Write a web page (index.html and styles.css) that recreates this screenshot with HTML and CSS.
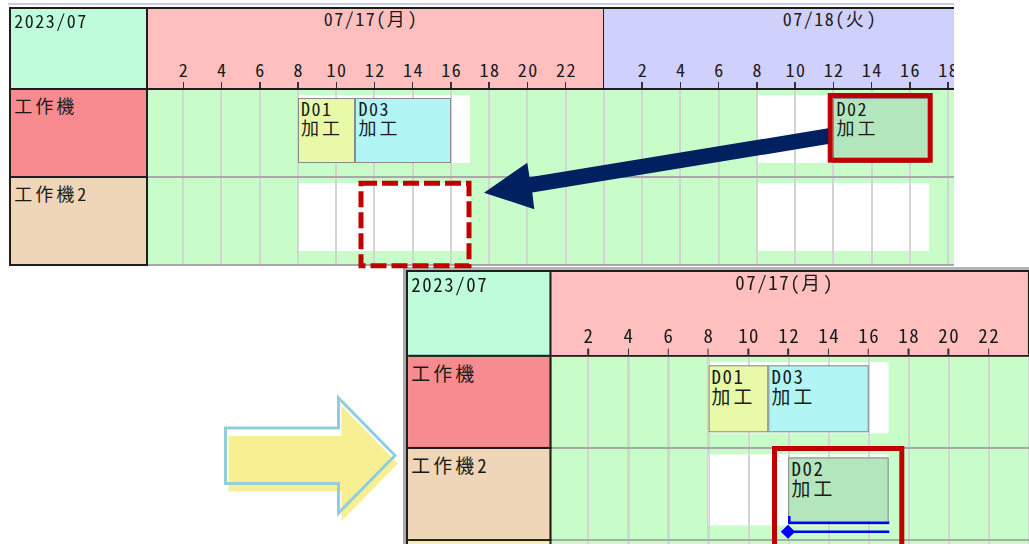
FILE: index.html
```html
<!DOCTYPE html>
<html lang="ja">
<head>
    <meta charset="UTF-8">
    <meta name="viewport" content="width=device-width, initial-scale=1.0">
    <title>作業の移動</title>
    <link rel="stylesheet" href="styles.css">
</head>
<body>
    <!-- before: D02 sits on 工作機, 07/18 -->
    <div class="shot shot-before">
        <div class="gantt">
            <div class="row head">
                <div class="label month">2023/07</div>
                <div class="track">
                    <div class="day mon">
                        <div class="day-title">07/17(<span class="jp">月</span>)</div>
                        <div class="hours"><span>2</span><span>4</span><span>6</span><span>8</span><span>10</span><span>12</span><span>14</span><span>16</span><span>18</span><span>20</span><span>22</span></div>
                    </div>
                    <div class="day tue">
                        <div class="day-title">07/18(<span class="jp">火</span>)</div>
                        <div class="hours"><span>2</span><span>4</span><span>6</span><span>8</span><span>10</span><span>12</span><span>14</span><span>16</span><span>18</span></div>
                    </div>
                </div>
            </div>
            <div class="row">
                <div class="label m1"><span class="jp">工作機</span></div>
                <div class="track lane">
                    <div class="open" style="--from: 8; --len: 9"></div>
                    <div class="open" style="--from: 32; --len: 9"></div>
                    <div class="task d01" style="--from: 8; --len: 3">D01<br><span class="jp">加工</span></div>
                    <div class="task d03" style="--from: 11; --len: 5">D03<br><span class="jp">加工</span></div>
                    <div class="task d02" style="--from: 36; --len: 5">D02<br><span class="jp">加工</span></div>
                </div>
            </div>
            <div class="row">
                <div class="label m2"><span class="jp">工作機</span>2</div>
                <div class="track lane">
                    <div class="open" style="--from: 8; --len: 9"></div>
                    <div class="open" style="--from: 32; --len: 9"></div>
                </div>
            </div>
        </div>
    </div>

    <!-- after: D02 moved to 工作機2, 07/17 12:00 -->
    <div class="shot shot-after">
        <div class="gantt">
            <div class="row head">
                <div class="label month">2023/07</div>
                <div class="track">
                    <div class="day mon">
                        <div class="day-title">07/17(<span class="jp">月</span>)</div>
                        <div class="hours"><span>2</span><span>4</span><span>6</span><span>8</span><span>10</span><span>12</span><span>14</span><span>16</span><span>18</span><span>20</span><span>22</span></div>
                    </div>
                </div>
            </div>
            <div class="row">
                <div class="label m1"><span class="jp">工作機</span></div>
                <div class="track lane">
                    <div class="open" style="--from: 8; --len: 9"></div>
                    <div class="task d01" style="--from: 8; --len: 3">D01<br><span class="jp">加工</span></div>
                    <div class="task d03" style="--from: 11; --len: 5">D03<br><span class="jp">加工</span></div>
                </div>
            </div>
            <div class="row">
                <div class="label m2"><span class="jp">工作機</span>2</div>
                <div class="track lane">
                    <div class="open" style="--from: 8; --len: 9"></div>
                    <div class="task d02" style="--from: 12; --len: 5">D02<br><span class="jp">加工</span></div>
                </div>
            </div>
            <div class="row">
                <div class="label m3"></div>
                <div class="track lane"></div>
            </div>
        </div>
    </div>

    <!-- callouts drawn over both shots -->
    <svg class="marks" width="1029" height="544" viewBox="0 0 1029 544">
        <rect x="830.2" y="95.5" width="100" height="64.7" fill="none" stroke="#c00000" stroke-width="5"/>
        <rect x="361" y="183.3" width="108" height="82.5" fill="none" stroke="#c00000" stroke-width="5" stroke-dasharray="16 5"/>
        <polygon points="484,192.7 527.3,162.7 529.5,177.3 828.3,128.3 828.3,144 532.3,192.6 534.3,209.3" fill="#002060"/>

        <polygon points="228.5,436 341.5,436 341.5,406 398,463.5 341.5,521 341.5,491.5 228.5,491.5" fill="#f8ee92"/>
        <polygon points="225.5,428 338.5,428 338.5,398 395,455.5 338.5,513 338.5,483.5 225.5,483.5" fill="none" stroke="#92cddc" stroke-width="3"/>

        <rect x="774.5" y="448.5" width="127.3" height="120" fill="none" stroke="#c00000" stroke-width="5"/>
        <path d="M789.3 516 V522.7 H889.3" fill="none" stroke="#0000ff" stroke-width="2.5"/>
        <path d="M788 531.7 H889.3" fill="none" stroke="#0000ff" stroke-width="2.5"/>
        <polygon points="788,524.7 795.2,531.7 788,538.7 780.8,531.7" fill="#0000ff"/>
    </svg>
</body>
</html>
```

FILE: styles.css
```css
body {
  margin: 0;
  width: 1029px;
  height: 544px;
  overflow: hidden;
  position: relative;
  background-color: #fff;
}

.shot {
  position: absolute;
  overflow: hidden;
}

.shot-before {
  left: 8px;
  top: 3.3px;
  width: 944.7px;
  padding: 2px 0 0 1.3px;
  border-top: 2px solid #c9cce0;
}

.shot-after {
  left: 402.7px;
  top: 266.7px;
  width: 630px;
  height: 280px;
  border-left: 3px solid #a9a9a9;
  border-top: 3px solid #b4b4b4;
}

.shot-after .gantt {
  width: 600px;
  transform: scale(1.047);
  transform-origin: 0 0;
}

/* chart */

.gantt {
  --hr: 19.12px;
  --hr2: 38.24px;
  --day: 458.88px;
  --grid: repeating-linear-gradient(90deg, #d4d4d4 0 1px, transparent 1px calc(var(--hr2) - 1px), #d4d4d4 calc(var(--hr2) - 1px) var(--hr2));
  width: 943.4px;
  border-left: 2px solid #1e1e1e;
  border-top: 2px solid #1e1e1e;
  font-family: "Noto Sans Mono CJK JP", "Noto Sans CJK JP", monospace;
  font-size: 18px;
  line-height: 19px;
  letter-spacing: 1.5px;
  color: #1a1a1a;
}

.jp {
  letter-spacing: 3px;
}

.row {
  display: flex;
  height: 88px;
}

.row.head {
  height: 81px;
}

.label {
  flex: 0 0 137px;
  box-sizing: border-box;
  border-right: 2px solid #1e1e1e;
  border-bottom: 2px solid #1e1e1e;
  padding: 5.7px 0 0 3px;
  position: relative;
  z-index: 1;
}

.label.month {
  background-color: #befcdc;
  padding-top: 1.5px;
}

.label.m1 {
  background-color: #f78b90;
}

.label.m2 {
  background-color: #f0d6b9;
}

.label.m3 {
  background-color: #f8f0a8;
}

.track {
  flex: none;
  width: calc(2 * var(--day));
  margin-left: -3.2px;
  display: flex;
  position: relative;
  box-sizing: border-box;
  border-bottom: 2px solid #a8a8a8;
}

.head .track {
  border-bottom-color: #1e1e1e;
}

.day {
  flex: none;
  width: calc(var(--day) + 1px);
  margin-right: -1px;
  box-sizing: border-box;
  border-right: 2px solid #1e1e1e;
  display: flex;
  flex-direction: column;
}

.day.mon {
  background-color: #ffbfbf;
}

.day.tue {
  background-color: #d0d0fc;
}

.day-title {
  text-align: center;
  padding-right: 6px;
}

.hours {
  margin-top: auto;
  display: flex;
  padding-left: var(--hr);
}

.hours span {
  flex: none;
  width: var(--hr2);
  height: 28.5px;
  box-sizing: border-box;
  padding-left: 1.5px;
  text-align: center;
  position: relative;
}

.hours span::after {
  content: "";
  position: absolute;
  left: calc(50% - 0.75px);
  bottom: 0;
  width: 1.5px;
  height: 6.5px;
  background-color: #333;
}

.lane {
  background-color: #c8fcc8;
  background-image: var(--grid);
}

.open {
  position: absolute;
  top: 4.5px;
  height: 68px;
  left: calc(var(--from) * var(--hr));
  width: calc(var(--len) * var(--hr));
  background-color: #fff;
  background-image: var(--grid);
}

.task {
  position: absolute;
  top: 8px;
  height: 64.3px;
  left: calc(var(--from) * var(--hr));
  width: calc(var(--len) * var(--hr));
  box-sizing: border-box;
  border: 1.5px solid #8a8a8a;
  padding-left: 2px;
  white-space: nowrap;
}

.task.d01 {
  background-color: #e8faa8;
}

.task.d03 {
  background-color: #b2f5f5;
}

.task.d02 {
  background-color: #b4e6be;
}

/* callouts */

.marks {
  position: absolute;
  left: 0;
  top: 0;
  pointer-events: none;
}
```
